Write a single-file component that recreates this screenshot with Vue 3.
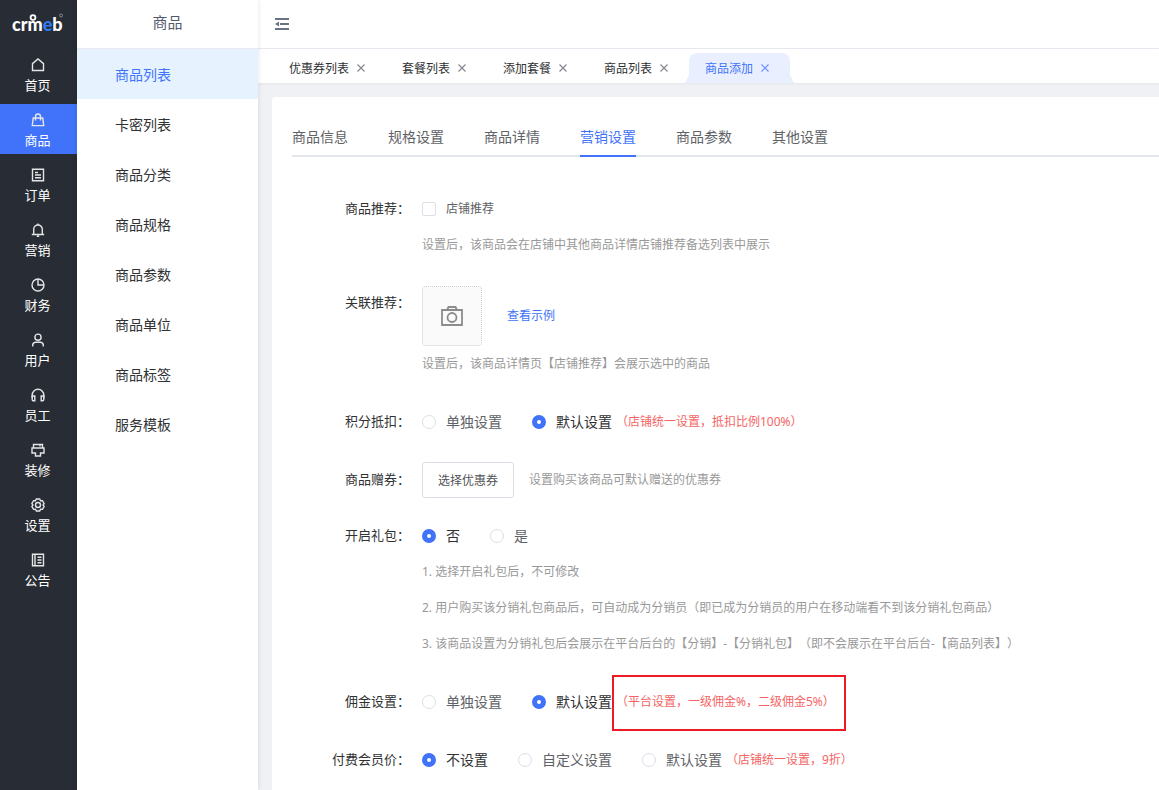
<script setup>
import { ref } from 'vue'

const modules = [
  { name: '首页', icon: 'home' },
  { name: '商品', icon: 'bag' },
  { name: '订单', icon: 'order' },
  { name: '营销', icon: 'bell' },
  { name: '财务', icon: 'pie' },
  { name: '用户', icon: 'user' },
  { name: '员工', icon: 'headset' },
  { name: '装修', icon: 'brush' },
  { name: '设置', icon: 'gear' },
  { name: '公告', icon: 'notice' },
]
const activeModule = ref('商品')

const subMenu = ['商品列表', '卡密列表', '商品分类', '商品规格', '商品参数', '商品单位', '商品标签', '服务模板']
const activeSub = ref('商品列表')

const pages = ['优惠券列表', '套餐列表', '添加套餐', '商品列表', '商品添加']
const activePage = ref('商品添加')

const steps = ['商品信息', '规格设置', '商品详情', '营销设置', '商品参数', '其他设置']
const activeStep = ref('营销设置')

const recommend = ref(false)
const points = ref('default')
const gift = ref('no')
const commission = ref('default')
const member = ref('none')
</script>

<template>
  <div class="layout">
    <nav class="modules" aria-label="主菜单">
      <div class="logo">
        <svg width="54" height="24" viewBox="0 0 54 24" role="img" aria-label="crmeb">
          <text x="0" y="18" class="logo-text">crm<tspan class="logo-e">e</tspan>b</text>
          <circle cx="21" cy="4.500" r="2.400" fill="none" stroke="#fff" stroke-width="1.800" />
          <circle cx="49" cy="2.500" r="1.500" fill="none" stroke="#8d9096" stroke-width="0.900" />
        </svg>
      </div>
      <a
        v-for="m in modules"
        :key="m.name"
        href="#"
        class="module"
        :class="{ active: m.name === activeModule }"
        @click.prevent="activeModule = m.name"
      >
        <svg class="module-icon" viewBox="0 0 14 14" aria-hidden="true">
          <path v-if="m.icon === 'home'" d="M1.500 12.500V5.600L7 1l5.500 4.600v6.900z" />
          <g v-else-if="m.icon === 'bag'">
            <path d="M2.200 5h9.600l.9 7.600H1.300z" />
            <path d="M4.500 7.500V3.500a2.500 2.500 0 0 1 5 0v4" />
          </g>
          <g v-else-if="m.icon === 'order'">
            <path d="M1.500 1.200h11v11.600h-11z" />
            <path d="M4 4.500h3M4 7h6M4 9.700h6" />
          </g>
          <g v-else-if="m.icon === 'bell'">
            <path d="M2.700 11.500V6.300a4.300 4.300 0 0 1 8.600 0v5.200" />
            <path d="M.8 11.500h12.400M5.800 13.200h2.400M7 .6v1.400" />
          </g>
          <g v-else-if="m.icon === 'pie'">
            <circle cx="7" cy="7" r="6" />
            <path d="M7 1v6h6" />
          </g>
          <g v-else-if="m.icon === 'user'">
            <circle cx="7" cy="4.200" r="3.100" />
            <path d="M1.700 13.400v-1.200q0-2.400 2.600-3h5.400q2.600.6 2.600 3v1.200" />
          </g>
          <g v-else-if="m.icon === 'headset'">
            <path d="M1.200 10V7a5.800 5.800 0 0 1 11.600 0v3" />
            <path d="M1.200 8h2.600v4.800H2.500q-1.300 0-1.300-1.300zM12.800 8h-2.600v4.800h1.300q1.300 0 1.300-1.300z" />
          </g>
          <g v-else-if="m.icon === 'brush'">
            <path d="M2.500 5V1.500h9V5M1 5h12v5H9.500v3h-5v-3H1zM9 1.500v2" />
          </g>
          <g v-else-if="m.icon === 'gear'">
            <path d="M5.300 1h3.400l.8 1.700 1.900-.1 1.700 2.900L12.100 7l1 1.500-1.700 2.900-1.900-.1-.8 1.700H5.300l-.8-1.700-1.900.1L.9 8.500 1.900 7l-1-1.500 1.700-2.900 1.900.1z" />
            <circle cx="7" cy="7" r="2.500" />
          </g>
          <g v-else>
            <path d="M1.500 1.200h11v11.600h-11zM4 1.200v11.600M6.500 4.200h4M6.500 7h4M6.500 9.800h4" />
          </g>
        </svg>
        <span>{{ m.name }}</span>
      </a>
    </nav>

    <aside class="submenu">
      <h1 class="submenu-title">商品</h1>
      <a
        v-for="s in subMenu"
        :key="s"
        href="#"
        class="submenu-item"
        :class="{ active: s === activeSub }"
        @click.prevent="activeSub = s"
      >{{ s }}</a>
    </aside>

    <div class="main">
      <header class="topbar">
        <button type="button" class="fold" aria-label="收起菜单">
          <svg width="14" height="12" viewBox="0 0 14 12" aria-hidden="true">
            <path d="M0 1h14M5 6h9M0 11h14" stroke="#6b7285" stroke-width="2" />
            <path d="M0 6l4-2.500v5z" fill="#6b7285" />
          </svg>
        </button>
      </header>

      <div class="pages">
        <div v-for="p in pages" :key="p" class="page" :class="{ active: p === activePage }">
          <a href="#" @click.prevent="activePage = p">{{ p }}</a>
          <button type="button" class="close" :aria-label="'关闭' + p">
            <svg width="14" height="14" viewBox="0 0 14 14" aria-hidden="true">
              <path d="M3.500 3.500l7 7M10.500 3.500l-7 7" fill="none" stroke="currentColor" stroke-width="1.200" />
            </svg>
          </button>
        </div>
      </div>

      <main class="card">
        <div class="steps" role="tablist">
          <button
            v-for="s in steps"
            :key="s"
            type="button"
            role="tab"
            class="step"
            :class="{ active: s === activeStep }"
            :aria-selected="s === activeStep"
            @click="activeStep = s"
          >{{ s }}</button>
        </div>

        <form class="form" @submit.prevent>
          <div class="row">
            <span class="label">商品推荐：</span>
            <div>
              <div class="line">
                <label class="option small"><input v-model="recommend" type="checkbox" />店铺推荐</label>
              </div>
              <p class="tip">设置后，该商品会在店铺中其他商品详情店铺推荐备选列表中展示</p>
            </div>
          </div>

          <div class="row">
            <span class="label">关联推荐：</span>
            <div>
              <div class="line picker">
                <button type="button" class="upload" aria-label="选择商品">
                  <svg width="22" height="20" viewBox="0 0 22 20" fill="none" stroke="#8c8c8c" stroke-width="1.800" aria-hidden="true">
                    <path d="M1 4h20v15H1zM6 4l1.500-3h7L16 4" />
                    <circle cx="11" cy="11.500" r="4.500" />
                  </svg>
                </button>
                <a href="#" class="example">查看示例</a>
              </div>
              <p class="tip">设置后，该商品详情页【店铺推荐】会展示选中的商品</p>
            </div>
          </div>

          <div class="row" role="radiogroup" aria-label="积分抵扣">
            <span class="label">积分抵扣：</span>
            <div class="line">
              <label class="option"><input v-model="points" type="radio" name="points" value="custom" /><span>单独设置</span></label>
              <label class="option"><input v-model="points" type="radio" name="points" value="default" /><span>默认设置</span></label>
              <span class="note">（店铺统一设置，抵扣比例100%）</span>
            </div>
          </div>

          <div class="row coupon">
            <span class="label">商品赠券：</span>
            <div class="line">
              <button type="button" class="choose">选择优惠券</button>
              <span class="tip">设置购买该商品可默认赠送的优惠券</span>
            </div>
          </div>

          <div class="row" role="radiogroup" aria-label="开启礼包">
            <span class="label">开启礼包：</span>
            <div>
              <div class="line">
                <label class="option"><input v-model="gift" type="radio" name="gift" value="no" /><span>否</span></label>
                <label class="option"><input v-model="gift" type="radio" name="gift" value="yes" /><span>是</span></label>
              </div>
              <p class="tip">1. 选择开启礼包后，不可修改</p>
              <p class="tip">2. 用户购买该分销礼包商品后，可自动成为分销员（即已成为分销员的用户在移动端看不到该分销礼包商品）</p>
              <p class="tip">3. 该商品设置为分销礼包后会展示在平台后台的【分销】-【分销礼包】（即不会展示在平台后台-【商品列表】）</p>
            </div>
          </div>

          <div class="row" role="radiogroup" aria-label="佣金设置">
            <span class="label">佣金设置：</span>
            <div class="line">
              <label class="option"><input v-model="commission" type="radio" name="commission" value="custom" /><span>单独设置</span></label>
              <label class="option"><input v-model="commission" type="radio" name="commission" value="default" /><span>默认设置</span></label>
              <span class="note marked">（平台设置，一级佣金%，二级佣金5%）</span>
            </div>
          </div>

          <div class="row" role="radiogroup" aria-label="付费会员价">
            <span class="label">付费会员价：</span>
            <div class="line">
              <label class="option"><input v-model="member" type="radio" name="member" value="none" /><span>不设置</span></label>
              <label class="option"><input v-model="member" type="radio" name="member" value="custom" /><span>自定义设置</span></label>
              <label class="option"><input v-model="member" type="radio" name="member" value="default" /><span>默认设置</span></label>
              <span class="note">（店铺统一设置，9折）</span>
            </div>
          </div>
        </form>
      </main>
    </div>
  </div>
</template>

<style>
body {
  margin: 0;
}
</style>

<style scoped>
.layout {
  display: flex;
  min-height: 100vh;
  font-family: "Noto Sans", "Noto Sans CJK SC", sans-serif;
  font-size: 14px;
  text-spacing-trim: space-all;
  color: #303133;
  background: #f0f1f5;
}
.layout * {
  box-sizing: border-box;
}
a {
  color: inherit;
  text-decoration: none;
}
button {
  padding: 0;
  border: 0;
  background: none;
  font: inherit;
  color: inherit;
  cursor: pointer;
}
p {
  margin: 0;
}

.modules {
  flex: none;
  display: flex;
  flex-direction: column;
  gap: 5px;
  width: 77px;
  background: #282c34;
  color: #fff;
}
.logo {
  height: 44px;
  padding: 13px 0 0 12px;
}
.logo svg {
  display: block;
}
.logo-text {
  font: 900 18px Lato, sans-serif;
  fill: #fff;
}
.logo-e {
  fill: #2d7bf5;
}
.module {
  display: flex;
  flex-direction: column;
  align-items: center;
  gap: 3px;
  height: 50px;
  padding: 9px 2px 0 0;
  font-size: 13px;
  line-height: 20px;
}
.module.active {
  background: #4073fa;
}
.module-icon {
  width: 14px;
  height: 14px;
  fill: none;
  stroke: #e4e5e7;
  stroke-width: 1.4;
}

.submenu {
  flex: none;
  z-index: 1;
  width: 181px;
  background: #fff;
  box-shadow: 0 0 5px rgba(0, 21, 41, 0.12);
}
.submenu-title {
  height: 49px;
  margin: 0;
  border-bottom: 1px solid #e8eaf2;
  font-size: 15px;
  font-weight: normal;
  line-height: 44px;
  text-align: center;
  color: #515a6e;
}
.submenu-item {
  display: block;
  height: 50px;
  padding-left: 38px;
  line-height: 52px;
}
.submenu-item.active {
  background: #e6f3ff;
  color: #4073fa;
}

.main {
  flex: 1;
  min-width: 0;
  display: flex;
  flex-direction: column;
}
.topbar {
  display: flex;
  align-items: center;
  height: 49px;
  padding-left: 17px;
  border-bottom: 1px solid #e8eaf2;
  background: #fff;
}
.fold,
.close {
  display: flex;
}
.pages {
  display: flex;
  align-items: flex-end;
  height: 34px;
  padding-left: 15px;
  background: #fff;
  box-shadow: 0 1px 3px rgba(0, 21, 41, 0.05);
}
.page {
  position: relative;
  display: flex;
  align-items: center;
  gap: 5px;
  height: 30px;
  padding: 0 18px 0 16px;
  font-size: 12px;
  white-space: nowrap;
}
.page .close {
  color: #85888f;
}
.page.active {
  border-radius: 8px 8px 0 0;
  background: #e9effe;
  color: #4073fa;
}
.page.active .close {
  color: #6c92fb;
}
.page.active::before,
.page.active::after {
  content: "";
  position: absolute;
  bottom: 0;
  width: 4px;
  height: 8px;
  background: #e9effe;
}
.page.active::before {
  right: 100%;
  clip-path: polygon(100% 0, 100% 100%, 0 100%);
}
.page.active::after {
  left: 100%;
  clip-path: polygon(0 0, 100% 100%, 0 100%);
}

.card {
  flex: 1;
  margin: 14px 0 0 14px;
  padding: 20px 0 12px 20px;
  border-radius: 4px 0 0 0;
  background: #fff;
}
.steps {
  display: flex;
  gap: 40px;
  height: 40px;
  box-shadow: inset 0 -2px #e3e6eb;
}
.step {
  border-bottom: 2px solid transparent;
  white-space: nowrap;
  color: #606266;
}
.step.active {
  border-color: #4073fa;
  color: #4073fa;
}

.form {
  padding-top: 34px;
}
.row {
  display: grid;
  grid-template-columns: 118px 1fr;
  column-gap: 12px;
  margin-bottom: 22px;
  line-height: 36px;
}
.row.coupon {
  margin-bottom: 20px;
}
.row:last-child {
  margin-bottom: 0;
}
.label {
  height: 36px;
  font-size: 13px;
  line-height: 34px;
  text-align: right;
  white-space: nowrap;
}
.line {
  display: flex;
  align-items: center;
  min-height: 36px;
  white-space: nowrap;
}
.option {
  display: flex;
  align-items: center;
  gap: 10px;
  color: #606266;
}
.option + .option {
  margin-left: 30px;
}
.option.small {
  font-size: 12px;
}
.option input {
  appearance: none;
  width: 14px;
  height: 14px;
  margin: 0;
  border: 1px solid #dcdfe6;
  background: #fff;
}
.option input[type="checkbox"] {
  border-radius: 2px;
}
.option input[type="checkbox"]:checked {
  border-color: #4073fa;
  background: #4073fa;
}
.option input[type="radio"] {
  border-radius: 50%;
}
.option input[type="radio"]:checked {
  border: 5px solid #4073fa;
}
.option input:checked + span {
  color: #303133;
}
.tip {
  font-size: 12px;
  color: #999;
}
.picker {
  gap: 25px;
  padding-top: 1px;
}
.upload {
  display: flex;
  align-items: center;
  justify-content: center;
  width: 60px;
  height: 60px;
  border: 1px dotted #cfcfcf;
  border-radius: 4px;
  background: #fafafa;
}
.example {
  font-size: 12px;
  color: #4073fa;
}
.choose {
  height: 36px;
  margin-right: 15px;
  padding: 0 15px;
  border: 1px solid #dcdfe6;
  border-radius: 3px;
  background: #fff;
  font-size: 12px;
  color: #515356;
}
.note {
  margin-left: 4px;
  font-size: 12px;
  color: #f56464;
}
.note.marked {
  position: relative;
}
.note.marked::after {
  content: "";
  position: absolute;
  inset: -9px -11px -11px -4px;
  border: 2px solid #ed1c24;
}
</style>
